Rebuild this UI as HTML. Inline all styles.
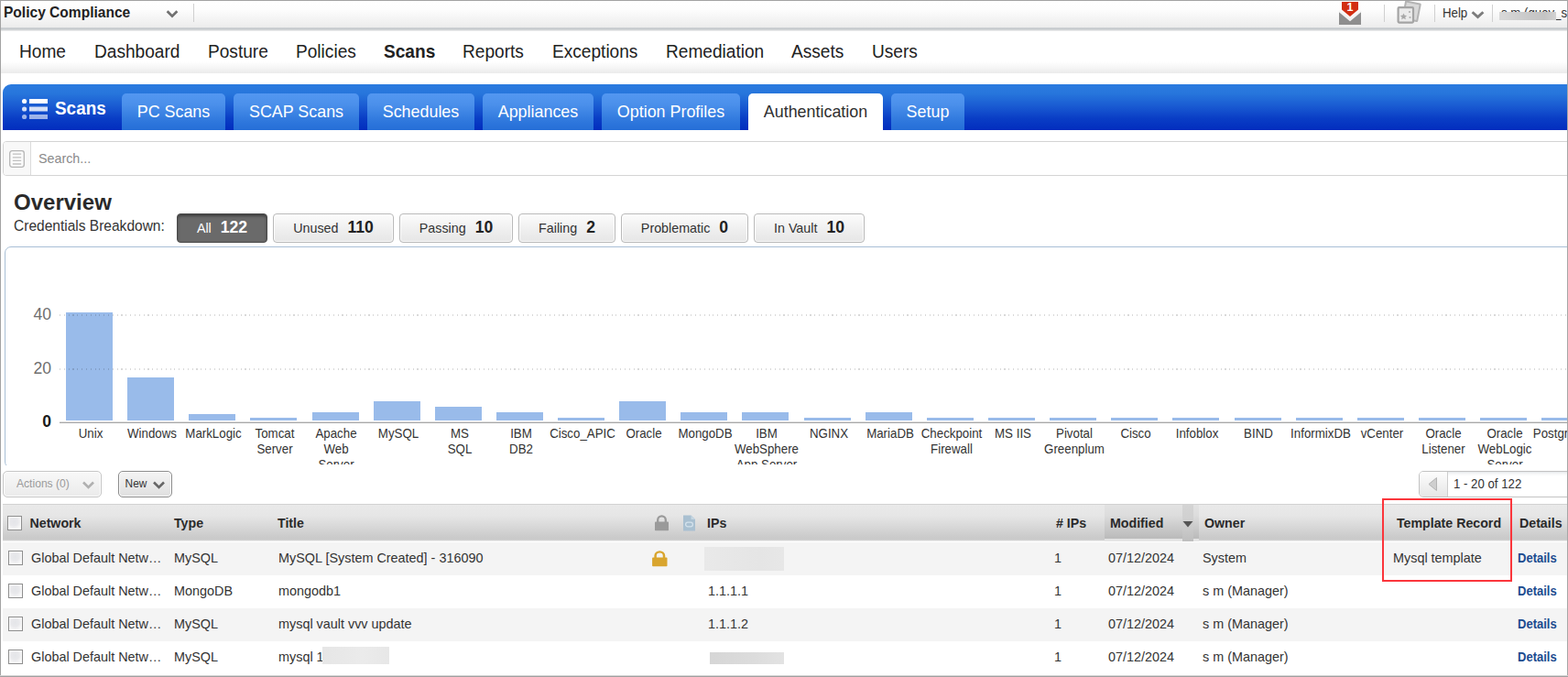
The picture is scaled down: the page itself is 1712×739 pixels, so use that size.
<!DOCTYPE html>
<html>
<head>
<meta charset="utf-8">
<title>Policy Compliance - Authentication</title>
<style>
*{box-sizing:border-box;margin:0;padding:0}
html,body{width:1712px;height:739px;overflow:hidden;background:#fff}
body{font-family:"Liberation Sans",Arial,sans-serif;color:#222;position:relative}
.abs{position:absolute}
.t{position:absolute;white-space:nowrap}
#frame{position:absolute;left:0;top:0;width:1712px;height:739px;overflow:hidden}
#topbar{left:0;top:0;width:1712px;height:30px;background:linear-gradient(#ffffff 0%,#fdfdfd 35%,#ececec 100%)}
#topline{left:0;top:30px;width:1712px;height:4px;background:linear-gradient(#d2d5d8 0%,#c4c8cb 40%,#dfe1e3 80%,#f4f4f4 100%)}
#appname{left:4.3px;top:3px;font-size:16.3px;font-weight:bold;color:#222;line-height:20px;transform:scaleX(.955);transform-origin:0 50%}
.vsep{position:absolute;width:1px;background:#d0d0d0}
#nav{left:0;top:34px;width:1712px;height:46px;background:linear-gradient(#fff 0%,#fff 72%,#f6f6f6 86%,#ebebeb 100%)}
.nv{position:absolute;top:45px;font-size:19.7px;line-height:23px;color:#222;white-space:nowrap;transform:scaleX(.97);transform-origin:0 50%}
#blue{left:3px;top:92px;width:1712px;height:50px;border-top-left-radius:9px;background:linear-gradient(#2b7bdf 0%,#2776dc 20%,#1858d1 50%,#093dc5 75%,#022dbe 100%)}
.tab{position:absolute;top:102px;height:40px;border-radius:5px 5px 0 0;background:linear-gradient(#5397f1 0%,#4b90eb 30%,#2f78dd 75%,#256ed7 100%);color:#fff;font-size:17.9px;line-height:41px;text-align:center;white-space:nowrap}
.tab.on{background:#fff;color:#303030}
#scans{left:59.8px;top:106.5px;color:#fff;font-weight:bold;font-size:19.6px;line-height:23px;transform:scaleX(.965);transform-origin:0 50%}
#search{left:3px;top:154px;width:1712px;height:38px;border:1px solid #d4d4d4;border-radius:4px 0 0 4px;background:#fff}
#sicon{left:4px;top:155px;width:30px;height:36px;background:#f8f8f8;border-right:1px solid #dcdcdc;border-radius:3px 0 0 3px}
#stext{left:42px;top:165px;font-size:14.3px;line-height:16px;color:#8a8a8a}
#ov{left:15.3px;top:206.5px;font-size:23.1px;font-weight:bold;line-height:28px;color:#2a2a2a;transform:scaleX(1.04);transform-origin:0 50%}
#cb{left:15.2px;top:236.7px;font-size:16.8px;line-height:20px;color:#333;transform:scaleX(.925);transform-origin:0 50%}
.btn{position:absolute;top:233px;height:32px;border:1px solid #b9b9b9;border-radius:4px;background:linear-gradient(#fcfcfc,#efefef 55%,#e6e6e6);font-size:14.3px;line-height:29px;color:#333;text-align:center;white-space:nowrap;box-shadow:inset 0 0 0 1px rgba(255,255,255,.8),inset 0 -2px 0 -1px #dcdcdc}
.btn b{font-size:17.6px;margin-left:10px;color:#222;position:relative;top:-.3px}
.btn.on{background:#6a6a6a;border-color:#4a4a4a;color:#fff;box-shadow:inset 0 2px 3px rgba(0,0,0,.4)}
.btn.on b{color:#fff}
#panel{left:5px;top:269px;width:1712px;height:242px;border:1px solid #a9bfd6;border-radius:7px 0 0 7px;background:#fff}
#pcover{left:0;top:508px;width:1712px;height:6px;background:#fff}
.grid{position:absolute;left:65px;width:1650px;height:2px;background:repeating-linear-gradient(90deg,rgba(0,0,0,.15) 0,rgba(0,0,0,.15) 1.1px,transparent 1.1px,transparent 4.82px)}
.yl{position:absolute;left:20px;width:36px;text-align:right;font-size:17.6px;line-height:20px;color:#6f6f6f}
.bar{position:absolute;width:51px;background:#99bbea}
.cl{position:absolute;top:1px;width:120px;text-align:center;font-size:14.3px;line-height:17px;color:#333;transform:scaleX(.93);transform-origin:50% 0}
#clip{left:0;top:464px;width:1712px;height:43px;overflow:hidden}
.tbtn{position:absolute;top:514px;height:29px;border:1px solid #c6c6c6;border-radius:5px;background:linear-gradient(#f8f8f8,#ebebeb);font-size:12.1px;line-height:27px;color:#9a9a9a;white-space:nowrap;box-shadow:inset 0 0 0 1px rgba(255,255,255,.8)}
#th{left:3px;top:550px;width:1712px;height:42px;background:linear-gradient(#d2d2d2 0,#d2d2d2 1px,#e9e9e9 1px,#e6e6e6 13px,#d8d8d8 25px,#cbcbcb 36px,#c9c9c9 39px,#d2d2d2 39px,#d2d2d2 40px,#ececec 40px,#ececec 41px,#fff 41px)}
.h{position:absolute;top:563px;font-size:14.2px;font-weight:bold;line-height:16px;color:#2a2a2a;white-space:nowrap}
.row{position:absolute;left:3px;width:1712px;height:36px}
.row.odd{background:#f4f4f4}
.c{position:absolute;font-size:14.4px;line-height:16px;color:#333;white-space:nowrap}
.d{color:#1b4b8f;font-weight:bold;font-size:14px;transform:scaleX(.93);transform-origin:0 50%;margin-top:-.4px}
.cbx{position:absolute;width:16px;height:16px;border:1px solid #8e8e8e;background:radial-gradient(circle at 45% 40%,#e4e5e9 0,#e9e9ec 40%,#fbfbfb 80%);box-shadow:inset 0 0 0 1px #f8f8f8}
.red{position:absolute;background:#e6e6e6}
#red{left:1509px;top:544px;width:142px;height:91px;border:2px solid #fb353b}
#bl{left:0;top:0;width:1px;height:739px;background:#a2a2a2}
#bt{left:0;top:0;width:1712px;height:1px;background:#a2a2a2}
#br{left:1711px;top:0;width:1px;height:739px;background:#a6a6a6}
#bb{left:0;top:737px;width:1712px;height:2px;background:linear-gradient(#d4d4d4 0,#d4d4d4 50%,#a0a0a0 50%)}
</style>
</head>
<body>
<div id="frame">
<div class="abs" id="topbar"></div><div class="abs" id="topline"></div>
<div class="t" id="appname">Policy Compliance</div>
<svg class="abs" style="left:181px;top:8.5px" width="14" height="12" viewBox="0 0 14 12"><path d="M1.6 3.2 L7 8.6 L12.4 3.2" fill="none" stroke="#707070" stroke-width="2.7"/></svg>
<div class="vsep" style="left:211px;top:4px;height:20px"></div>
<svg class="abs" style="left:1460px;top:1px" width="28" height="28" viewBox="0 0 28 28">
<path d="M2 11 L14 21 L26 11 L26 26 L2 26 Z" fill="#8e8e8e"/>
<path d="M5 1 L23 1 L23 9.5 L14 17 L5 9.5 Z" fill="#d22e12"/>
<path d="M2 11 L14 21 L26 11" fill="none" stroke="#f4f4f4" stroke-width="2"/>
</svg>
<div class="t" style="left:1467px;top:1px;width:14px;text-align:center;font-size:12.5px;font-weight:bold;line-height:14px;color:#fff">1</div>
<div class="vsep" style="left:1511px;top:5px;height:19px"></div>
<svg class="abs" style="left:1524px;top:1px" width="28" height="26" viewBox="0 0 28 26">
<g transform="rotate(11 18 12)"><rect x="9" y="2" width="16" height="19" rx="0.5" fill="#d9d9d9" stroke="#b3b3b3" stroke-width="2"/></g>
<rect x="2.6" y="7.2" width="16.4" height="16.4" rx="1" fill="#ebebeb" stroke="#a4a4a4" stroke-width="2.2"/>
<path d="M8.5 13.5 l1.1 2.3 2.5 .3 -1.8 1.7 .5 2.5 -2.3-1.2 -2.3 1.2 .5-2.5 -1.8-1.7 2.5-.3z" fill="#a8a8a8"/>
<circle cx="15" cy="12" r="1.1" fill="#b0b0b0"/><circle cx="15.5" cy="18" r="1.1" fill="#b0b0b0"/>
</svg>
<div class="vsep" style="left:1566px;top:5px;height:19px"></div>
<div class="t" style="left:1575px;top:6px;font-size:14.4px;line-height:17px;color:#333;transform:scaleX(.92);transform-origin:0 50%">Help</div>
<svg class="abs" style="left:1606px;top:9.5px" width="15" height="12" viewBox="0 0 15 12"><path d="M1.6 3.2 L7.5 8.6 L13.4 3.2" fill="none" stroke="#7c7c7c" stroke-width="2.9"/></svg>
<div class="vsep" style="left:1629px;top:5px;height:19px"></div>
<div class="t" style="left:1638.5px;top:6.3px;font-size:14.4px;line-height:17px;color:#333;transform:scaleX(.92);transform-origin:0 50%">s m (quay_s</div>
<div class="abs" style="left:1637px;top:13px;width:61.5px;height:9px;background:linear-gradient(90deg,#d9d9d9,#c8c8c8 55%,#c4c4c4 80%,#d2d2d2)"></div>
<div class="abs" id="nav"></div>
<div class="nv" style="left:21px">Home</div>
<div class="nv" style="left:103px">Dashboard</div>
<div class="nv" style="left:227px">Posture</div>
<div class="nv" style="left:323px">Policies</div>
<div class="nv" style="left:419px;font-weight:bold">Scans</div>
<div class="nv" style="left:505px">Reports</div>
<div class="nv" style="left:603px">Exceptions</div>
<div class="nv" style="left:727px">Remediation</div>
<div class="nv" style="left:864px">Assets</div>
<div class="nv" style="left:952px">Users</div>
<div class="abs" id="blue"></div>
<svg class="abs" style="left:23px;top:105.5px" width="30" height="26" viewBox="0 0 30 26">
<circle cx="3.6" cy="4.5" r="2.6" fill="#fff"/><rect x="9" y="2" width="20" height="5" fill="#fff"/>
<circle cx="3.6" cy="13" r="2.6" fill="#fff" opacity=".82"/><rect x="9" y="10.5" width="20" height="5" fill="#fff" opacity=".82"/>
<circle cx="3.6" cy="21.5" r="2.6" fill="#fff" opacity=".6"/><rect x="9" y="19" width="20" height="5" fill="#fff" opacity=".6"/>
</svg>
<div class="t" id="scans">Scans</div>
<div class="tab" style="left:133px;width:113px">PC Scans</div>
<div class="tab" style="left:255px;width:137px">SCAP Scans</div>
<div class="tab" style="left:401px;width:117px">Schedules</div>
<div class="tab" style="left:527px;width:121px">Appliances</div>
<div class="tab" style="left:657px;width:151px">Option Profiles</div>
<div class="tab on" style="left:817px;width:147px">Authentication</div>
<div class="tab" style="left:973px;width:80px">Setup</div>
<div class="abs" id="search"></div><div class="abs" id="sicon"></div>
<svg class="abs" style="left:9px;top:163px" width="20" height="22" viewBox="0 0 20 22">
<rect x="1.7" y="1.7" width="15.6" height="17.6" rx="2.5" fill="#fbfbfb" stroke="#b5b5b5" stroke-width="1.3"/>
<path d="M4.8 5.2h9.4M4.8 8.8h9.4M4.8 12.4h9.4M4.8 16h9.4" stroke="#c0c0c0" stroke-width="1.3"/>
</svg>
<div class="t" id="stext">Search...</div>
<div class="t" id="ov">Overview</div>
<div class="t" id="cb">Credentials Breakdown:</div>
<div class="btn on" style="left:193px;width:99px">All<b>122</b></div>
<div class="btn" style="left:298px;width:132px">Unused<b>110</b></div>
<div class="btn" style="left:436px;width:124px">Passing<b>10</b></div>
<div class="btn" style="left:566px;width:106px">Failing<b>2</b></div>
<div class="btn" style="left:678px;width:139px">Problematic<b>0</b></div>
<div class="btn" style="left:823px;width:121px">In Vault<b>10</b></div>
<div class="abs" id="panel"></div>
<div class="abs" style="left:65px;top:460px;width:1650px;height:2px;background:linear-gradient(#dedede 0,#dedede 50%,#a9a9a9 50%)"></div>
<div class="yl" style="top:333px">40</div><div class="yl" style="top:392px">20</div>
<div class="yl" style="top:450px;color:#1a1a1a;font-weight:bold">0</div>
<div class="bar" style="left:72.0px;top:341px;height:118px"></div>
<div class="bar" style="left:139.1px;top:412px;height:47px"></div>
<div class="bar" style="left:206.3px;top:452px;height:7px"></div>
<div class="bar" style="left:273.4px;top:456px;height:3px"></div>
<div class="bar" style="left:340.5px;top:450px;height:9px"></div>
<div class="bar" style="left:407.6px;top:438px;height:21px"></div>
<div class="bar" style="left:474.8px;top:444px;height:15px"></div>
<div class="bar" style="left:541.9px;top:450px;height:9px"></div>
<div class="bar" style="left:609.0px;top:456px;height:3px"></div>
<div class="bar" style="left:676.2px;top:438px;height:21px"></div>
<div class="bar" style="left:743.3px;top:450px;height:9px"></div>
<div class="bar" style="left:810.4px;top:450px;height:9px"></div>
<div class="bar" style="left:877.6px;top:456px;height:3px"></div>
<div class="bar" style="left:944.7px;top:450px;height:9px"></div>
<div class="bar" style="left:1011.8px;top:456px;height:3px"></div>
<div class="bar" style="left:1078.9px;top:456px;height:3px"></div>
<div class="bar" style="left:1146.1px;top:456px;height:3px"></div>
<div class="bar" style="left:1213.2px;top:456px;height:3px"></div>
<div class="bar" style="left:1280.3px;top:456px;height:3px"></div>
<div class="bar" style="left:1347.5px;top:456px;height:3px"></div>
<div class="bar" style="left:1414.6px;top:456px;height:3px"></div>
<div class="bar" style="left:1481.7px;top:456px;height:3px"></div>
<div class="bar" style="left:1548.9px;top:456px;height:3px"></div>
<div class="bar" style="left:1616.0px;top:456px;height:3px"></div>
<div class="bar" style="left:1683.1px;top:456px;height:3px"></div>
<div class="bar" style="left:1750.2px;top:456px;height:3px"></div>
<div class="grid" style="top:343px"></div><div class="grid" style="top:402px"></div>
<div class="abs" id="clip">
<div class="cl" style="left:38.9px">Unix</div>
<div class="cl" style="left:106.0px">Windows</div>
<div class="cl" style="left:173.2px">MarkLogic</div>
<div class="cl" style="left:240.3px">Tomcat<br>Server</div>
<div class="cl" style="left:307.4px">Apache<br>Web<br>Server</div>
<div class="cl" style="left:374.5px">MySQL</div>
<div class="cl" style="left:441.7px">MS<br>SQL</div>
<div class="cl" style="left:508.8px">IBM<br>DB2</div>
<div class="cl" style="left:575.9px">Cisco_APIC</div>
<div class="cl" style="left:643.1px">Oracle</div>
<div class="cl" style="left:710.2px">MongoDB</div>
<div class="cl" style="left:777.3px">IBM<br>WebSphere<br>App Server</div>
<div class="cl" style="left:844.5px">NGINX</div>
<div class="cl" style="left:911.6px">MariaDB</div>
<div class="cl" style="left:978.7px">Checkpoint<br>Firewall</div>
<div class="cl" style="left:1045.8px">MS IIS</div>
<div class="cl" style="left:1113.0px">Pivotal<br>Greenplum</div>
<div class="cl" style="left:1180.1px">Cisco</div>
<div class="cl" style="left:1247.2px">Infoblox</div>
<div class="cl" style="left:1314.4px">BIND</div>
<div class="cl" style="left:1381.5px">InformixDB</div>
<div class="cl" style="left:1448.6px">vCenter</div>
<div class="cl" style="left:1515.8px">Oracle<br>Listener</div>
<div class="cl" style="left:1582.9px">Oracle<br>WebLogic<br>Server</div>
<div class="cl" style="left:1650.0px">PostgreSQL</div>
<div class="cl" style="left:1717.2px">Sybase</div>
</div>
<div class="abs" id="pcover"></div>
<div class="tbtn" style="left:3px;width:108px;padding-left:14px">Actions (0)</div>
<svg class="abs" style="left:89px;top:523px" width="15" height="12" viewBox="0 0 15 12"><path d="M2 3.5 L7.5 9 L13 3.5" fill="none" stroke="#b0b0b0" stroke-width="2.6"/></svg>
<div class="tbtn" style="left:129px;width:59px;padding-left:6.6px;color:#333;border-color:#8c8c8c;background:linear-gradient(#f4f4f4,#dfdfdf);font-size:11.9px">New</div>
<svg class="abs" style="left:166px;top:523px" width="15" height="12" viewBox="0 0 15 12"><path d="M2 3.5 L7.5 9 L13 3.5" fill="none" stroke="#666" stroke-width="2.6"/></svg>
<div class="abs" style="left:1549px;top:514px;width:170px;height:29px;border:1px solid #c3c3c3;border-radius:5px 0 0 5px;background:linear-gradient(#e4e7e9 0,#f6f7f8 2px,#fff 5px)"></div>
<div class="abs" style="left:1550px;top:515px;width:31px;height:27px;border-right:1px solid #cdcdcd;border-radius:4px 0 0 4px;background:linear-gradient(#fdfdfd,#e6e6e6)"></div>
<svg class="abs" style="left:1558px;top:520px" width="13" height="17" viewBox="0 0 13 17"><path d="M10.5 1.5 L2 8.5 L10.5 15.5 Z" fill="#cfcfcf" stroke="#b4b4b4" stroke-width="1"/></svg>
<div class="t" style="left:1587.3px;top:520px;font-size:14.3px;line-height:17px;color:#333;transform:scaleX(.925);transform-origin:0 50%">1 - 20 of 122</div>
<div class="abs" id="th"></div>
<div class="abs" style="left:1206px;top:551px;width:103px;height:40px;background:linear-gradient(#e2e2e2 0,#dcdcdc 12px,#cbcbcb 24px,#bababa 37px,#e2e2e2 37px,#e6e6e6 40px)"></div>
<div class="abs" style="left:1291px;top:551px;width:12px;height:40px;background:linear-gradient(#d4d4d4 0%,#cfcfcf 50%,#bebebe 100%)"></div>
<svg class="abs" style="left:1291px;top:568px" width="12" height="8" viewBox="0 0 12 8"><path d="M0.5 1 L11.5 1 L6 7.5 Z" fill="#555"/></svg>
<div class="cbx" style="left:8px;top:563px"></div>
<div class="h" style="left:32.5px">Network</div>
<div class="h" style="left:190px">Type</div>
<div class="h" style="left:303px">Title</div>
<div class="h" style="left:772px">IPs</div>
<div class="h" style="left:1153px"># IPs</div>
<div class="h" style="left:1212px">Modified</div>
<div class="h" style="left:1315px">Owner</div>
<div class="h" style="left:1525px">Template Record</div>
<div class="h" style="left:1659px">Details</div>
<svg class="abs" style="left:714px;top:562px" width="17" height="18" viewBox="0 0 17 18"><path d="M4.2 8 V5.6 a4.3 4.3 0 0 1 8.6 0 V8" fill="none" stroke="#9a9a9a" stroke-width="2.3"/><rect x="1" y="7.6" width="15" height="9.6" rx="0.8" fill="#9a9a9a"/></svg>
<svg class="abs" style="left:745px;top:562px" width="15" height="18" viewBox="0 0 15 18"><path d="M1 0.5 H9.5 L14 5 V17.5 H1 Z" fill="#a9c0d1"/><path d="M9.5 0.5 V5 H14" fill="#c5d6e2"/><rect x="3.6" y="8.2" width="7.8" height="4.6" rx="2.3" fill="none" stroke="#d4e2ec" stroke-width="1.3"/></svg>
<div class="row odd" style="top:592px;height:36px"></div>
<div class="cbx" style="left:9px;top:601px"></div>
<div class="c" style="left:34px;top:601px">Global Default Netw&#8230;</div>
<div class="c" style="left:190px;top:601px">MySQL</div>
<div class="c" style="left:304px;top:601px">MySQL [System Created] - 316090</div>
<div class="c" style="left:1151px;top:601px">1</div>
<div class="c" style="left:1210px;top:601px">07/12/2024</div>
<div class="c" style="left:1313px;top:601px">System</div>
<div class="c" style="left:1521px;top:601px">Mysql template</div>
<div class="c d" style="left:1657px;top:601px">Details</div>
<div class="row" style="top:628px;height:36px"></div>
<div class="cbx" style="left:9px;top:637px"></div>
<div class="c" style="left:34px;top:637px">Global Default Netw&#8230;</div>
<div class="c" style="left:190px;top:637px">MongoDB</div>
<div class="c" style="left:304px;top:637px">mongodb1</div>
<div class="c" style="left:773px;top:637px">1.1.1.1</div>
<div class="c" style="left:1151px;top:637px">1</div>
<div class="c" style="left:1210px;top:637px">07/12/2024</div>
<div class="c" style="left:1313px;top:637px">s m (Manager)</div>
<div class="c d" style="left:1657px;top:637px">Details</div>
<div class="row odd" style="top:664px;height:36px"></div>
<div class="cbx" style="left:9px;top:673px"></div>
<div class="c" style="left:34px;top:673px">Global Default Netw&#8230;</div>
<div class="c" style="left:190px;top:673px">MySQL</div>
<div class="c" style="left:304px;top:673px">mysql vault vvv update</div>
<div class="c" style="left:773px;top:673px">1.1.1.2</div>
<div class="c" style="left:1151px;top:673px">1</div>
<div class="c" style="left:1210px;top:673px">07/12/2024</div>
<div class="c" style="left:1313px;top:673px">s m (Manager)</div>
<div class="c d" style="left:1657px;top:673px">Details</div>
<div class="row" style="top:700px;height:40px"></div>
<div class="cbx" style="left:9px;top:709px"></div>
<div class="c" style="left:34px;top:709px">Global Default Netw&#8230;</div>
<div class="c" style="left:190px;top:709px">MySQL</div>
<div class="c" style="left:304px;top:709px">mysql 1</div>
<div class="c" style="left:1151px;top:709px">1</div>
<div class="c" style="left:1210px;top:709px">07/12/2024</div>
<div class="c" style="left:1313px;top:709px">s m (Manager)</div>
<div class="c d" style="left:1657px;top:709px">Details</div>
<svg class="abs" style="left:711.3px;top:601px" width="18.6" preserveAspectRatio="none" height="18" viewBox="0 0 17 18"><path d="M4.2 8 V5.6 a4.3 4.3 0 0 1 8.6 0 V8" fill="none" stroke="#d9a52e" stroke-width="2.3"/><rect x="1" y="7.6" width="15" height="9.6" rx="0.8" fill="#d9a52e"/></svg>
<div class="red" style="left:769px;top:597px;width:87px;height:26px;background:linear-gradient(90deg,#e9e9e9,#e5e5e5 70%,#e7e7e7)"></div>
<div class="red" style="left:352px;top:706px;width:73px;height:19px;background:linear-gradient(90deg,#e6e6e6,#ebebeb 60%,#e7e7e7)"></div>
<div class="red" style="left:775px;top:712px;width:81px;height:13px;background:linear-gradient(90deg,#d6d6d6,#dcdcdc 60%,#e3e3e3)"></div>
<div class="abs" id="red"></div>
<div class="abs" id="bl"></div><div class="abs" id="bt"></div><div class="abs" id="br"></div><div class="abs" id="bb"></div>
</div>
</body>
</html>
